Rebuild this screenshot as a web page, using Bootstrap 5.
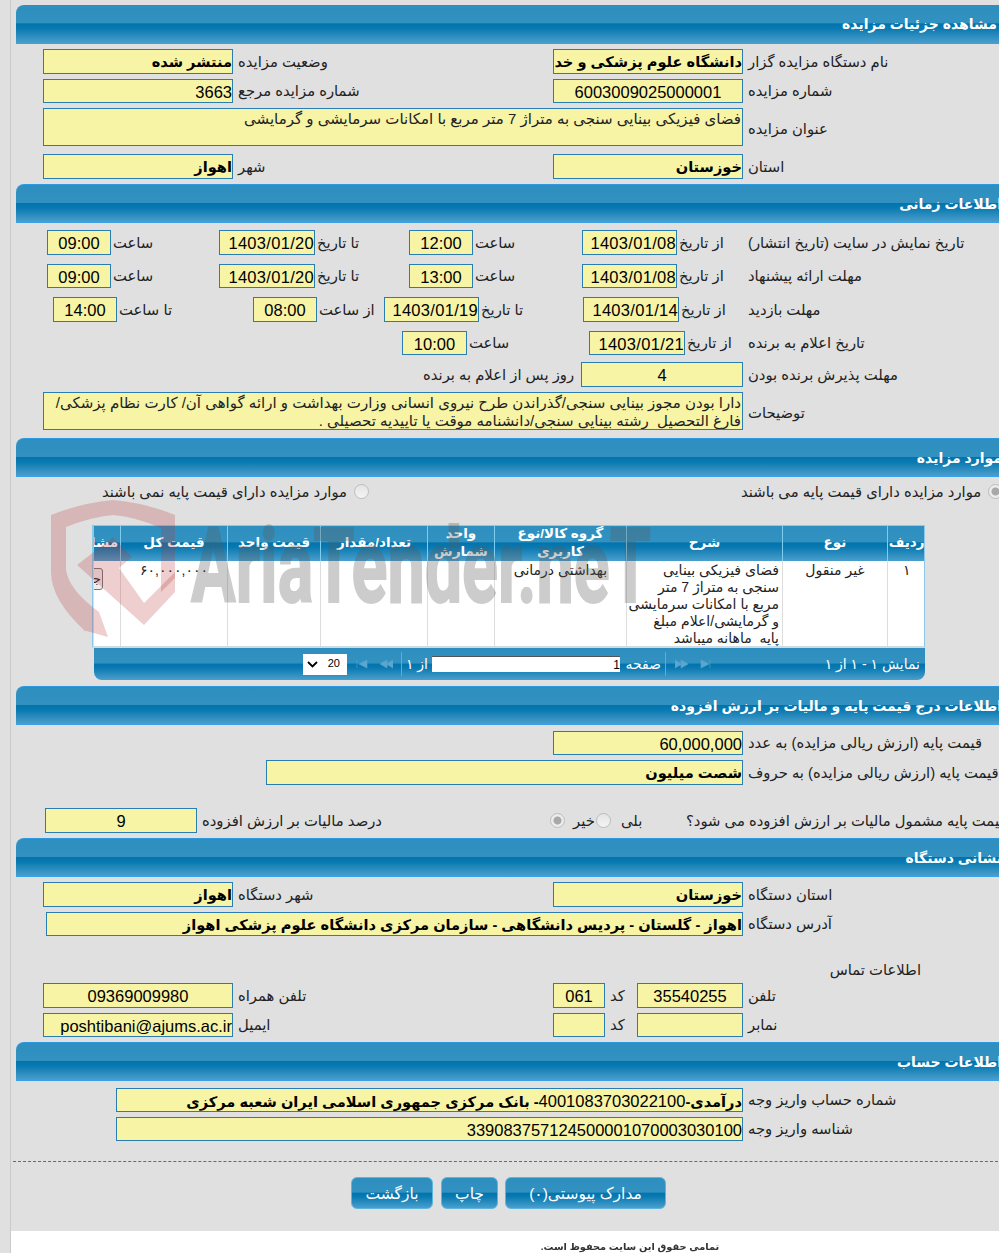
<!DOCTYPE html>
<html lang="fa">
<head>
<meta charset="utf-8">
<title>مشاهده جزئیات مزایده</title>
<link rel="stylesheet" href="https://cdn.jsdelivr.net/npm/bootstrap@5.3.0/dist/css/bootstrap.min.css">
<style>
html,body{height:1253px;overflow:hidden;background:#e0e0e0;margin:0}
body{font-family:"Liberation Sans","DejaVu Sans",sans-serif;font-size:14.8px;color:#222;line-height:1.2}
.shell{margin-left:10px;border-left:1px solid #cacaca;width:1010px;height:1253px;position:relative;overflow:hidden}
.mainarea{padding:5px 0 0 5px;height:1231px}
.hdr{height:39px;border-radius:8px 0 0 0;width:989px;direction:rtl;color:#fff;font-weight:700;font-size:14px;line-height:38px;padding-right:3px;white-space:nowrap;
 background:linear-gradient(#2d8fc0 0,#3291bf 48%,#0074ae 49%,#0a79b1 62%,#4a9fcc 100%);border-bottom:1px solid #3aa0e8}
.hdr.first{padding-right:8px}
.hdr.lined{border-top:1px solid #2f97dc}
.frow{display:grid}
.fld{background:#f7f4a6;border:1px solid #2a7db3;direction:rtl;text-align:right;white-space:nowrap;overflow:hidden;color:#000;font-size:16.5px;padding:1px 0 0 0;line-height:22px}
.fa{font-size:14.6px;font-weight:700;line-height:23px}
.dg{font-size:16.5px;font-weight:400}
.dt{letter-spacing:.3px}
.cen{text-align:center}
.area{white-space:normal;font-size:15px;line-height:18px;padding:1px 1px 0 2px;font-weight:400;color:#222}
.lbl{direction:rtl;text-align:left;white-space:nowrap;width:max-content;justify-self:start;align-self:center;padding:2px 0 0 5px;font-size:14.8px}
.lbl.near{padding-left:2px}
.lbl.tall{padding-top:6px}
.ga{padding-left:27px;grid-template-columns:190px 320px 190px 1fr}
.gw{padding-left:27px;grid-template-columns:700px 1fr}
.gt{padding-left:31px;grid-template-columns:64px 108px 96px 94px 64px 109px 95px 66px 1fr}
.gv{padding-left:37px;grid-template-columns:64px 136px 64px 67px 95px 104px 96px 64px 1fr}
.gn{padding-left:386px;grid-template-columns:65px 122px 96px 58px 1fr}
.gd{padding-left:405px;grid-template-columns:160px 162px 1fr}
.gr{padding-left:86px;grid-template-columns:252px 15px 372px 247px 15px}
.gp{padding-left:537px;grid-template-columns:190px 1fr}
.gq{padding-left:250px;grid-template-columns:477px 1fr}
.gx{padding-left:29px;grid-template-columns:152px 353px 15px 6px 25px 15px 8px 24px 38px 1fr}
.gad{padding-left:30px;grid-template-columns:697px 1fr}
.gc{padding-left:27px;grid-template-columns:190px 320px 52px 32px 106px 1fr}
.gb{padding-left:100px;grid-template-columns:627px 1fr}
.rh15{height:15px}.rh24{height:24px}.rh25{height:25px}.rh38{height:38px}
.tm5{margin-top:5px}.tm6{margin-top:6px}.tm7{margin-top:7px}.tm8{margin-top:8px}.tm9{margin-top:9px}.tm23{margin-top:23px}.tm25{margin-top:25px}.tm4{margin-top:4px}.tm28{margin-top:28px}.tm20{margin-top:20px}.tm15{margin-top:15px}
.rad{width:15px;height:15px;border-radius:50%;border:1px solid #bdbdbd;background:linear-gradient(#e4e4e4,#f4f4f4);display:block;align-self:center}
.rad.on{background:radial-gradient(circle,#a8a8a8 0 3.5px,#ececec 4.5px)}
.lab{padding:2px 2px 0 0;align-self:start}
.contact{direction:rtl;padding-right:84px;width:989px;height:18px;line-height:18px;font-size:14.8px}
.gridwrap{margin-left:76px;width:833px;overflow:hidden;border:1px solid #8cc8e8;border-bottom:2px solid #cfdbe3;height:123px}
.gridtable{table-layout:fixed;width:832px;direction:rtl;margin:-1px 0 0 0;background:#fff;border-collapse:collapse;--bs-table-bg:transparent}
.gridtable th{height:35px;padding:0 2px;text-align:center;color:#fff;font-size:13.5px;line-height:18px;font-weight:700;border:0;border-left:1px solid #7fcdee;
 background:linear-gradient(#2d8fc0 0,#3291bf 48%,#0074ae 49%,#0a79b1 62%,#4a9fcc 100%);overflow:hidden;white-space:nowrap;vertical-align:middle}
.gridtable td{height:87px;padding:1px 3px 0 3px;font-size:14px;line-height:17px;vertical-align:top;border:0;border-left:1px solid #ddd;color:#222;overflow:hidden;white-space:nowrap}
.cr{width:38px}.ct{width:105px}.cs{width:156px}.cg{width:132px}.cu{width:67px}.cq{width:107px}.cp{width:93px}.ca{width:107px}.cz{width:27px}
.tc{text-align:center}
.gridtable td.cellwrap{padding:0}
.cellbtn{display:block;width:70px;height:22px;margin:7px 17px 0 0;border:1px solid #777;border-radius:3px;background:#eee;font-size:13px;line-height:20px;color:#222;text-align:right;padding:0 1px 0 0;direction:rtl;overflow:hidden}
.pager{margin-left:78px;width:831px;height:32px;border-radius:0 0 8px 8px;color:#fff;font-size:14px;display:flex;align-items:center;direction:ltr;
 background:linear-gradient(#2d8fc0 0,#3291bf 48%,#0074ae 49%,#0a79b1 62%,#4a9fcc 100%)}
.pgsel{width:44px;height:21px;background:#fff;color:#000;margin-left:209px;display:flex;align-items:center;justify-content:space-between;padding:0 7px 0 4px;font-size:11px}
.pgico{display:block;margin-left:9px}
.pgsep{width:1px;height:24px;background:#6aa9c9;margin-left:8px}
.pgsep2{margin-left:4px}
.pgtx{direction:rtl;white-space:nowrap}
.pgof{margin-left:6px;width:24px;padding-right:4px}
.pginp{width:188px;height:16px;background:#fff;color:#000;text-align:right;font-size:12px;line-height:16px;border-top:1px solid #555}
.pgpg{margin-left:5px;width:36px}
.pgcount{margin-left:auto;margin-right:5px}
.dash{border-top:1px dashed #2a7db3;margin-left:-3px;width:1000px;height:0}
.btnrow{padding-left:335px;display:flex;height:32px}
.actbtn{height:32px;padding:1px 0 0 0;display:block;border:1px solid #5fb4dd;border-radius:6px;color:#fff;font-size:15.5px;line-height:29px;text-align:center;direction:rtl;
 background:linear-gradient(#2d8fc0 0,#3291bf 48%,#0074ae 49%,#0a79b1 62%,#4a9fcc 100%)}
.actbtn:hover{color:#fff}
.bw82{width:82px}.bw57{width:57px;margin-left:8px}.bw161{width:161px;margin-left:7px}
.foot{background:#fff;height:22px;direction:rtl;text-align:center;color:#333;font-weight:700;font-size:9.8px;padding-top:10px;width:989px}
.foot span{display:inline-block;filter:blur(.4px)}
.footin{width:600px;margin-right:70px}
.wm{position:absolute;left:0;top:0;pointer-events:none}
</style>
</head>
<body>
<div class="shell">
<div class="mainarea">
  <div class="hdr first">مشاهده جزئیات مزایده</div>
  <div class="frow ga rh25 tm5"><div class="fld fa">منتشر شده</div><div class="lbl">وضعیت مزایده</div><div class="fld fa">دانشگاه علوم پزشکی و خدمات بهداشتی درمانی اهواز</div><div class="lbl">نام دستگاه مزایده گزار</div></div>
  <div class="frow ga rh24 tm5"><div class="fld">3663</div><div class="lbl">شماره مزایده مرجع</div><div class="fld cen">6003009025000001</div><div class="lbl">شماره مزایده</div></div>
  <div class="frow gw rh38 tm5"><div class="fld area">فضای فیزیکی بینایی سنجی به متراژ 7 متر مربع با امکانات سرمایشی و گرمایشی</div><div class="lbl tall">عنوان مزایده</div></div>
  <div class="frow ga rh25 tm8"><div class="fld fa">اهواز</div><div class="lbl">شهر</div><div class="fld fa">خوزستان</div><div class="lbl">استان</div></div>

  <div class="hdr lined tm5">اطلاعات زمانی</div>
  <div class="frow gt rh25 tm7"><div class="fld cen">09:00</div><div class="lbl near">ساعت</div><div class="fld dt">1403/01/20</div><div class="lbl near">تا تاریخ</div><div class="fld cen">12:00</div><div class="lbl near">ساعت</div><div class="fld dt">1403/01/08</div><div class="lbl near">از تاریخ</div><div class="lbl">تاریخ نمایش در سایت (تاریخ انتشار)</div></div>
  <div class="frow gt rh24 tm9"><div class="fld cen">09:00</div><div class="lbl near">ساعت</div><div class="fld dt">1403/01/20</div><div class="lbl near">تا تاریخ</div><div class="fld cen">13:00</div><div class="lbl near">ساعت</div><div class="fld dt">1403/01/08</div><div class="lbl near">از تاریخ</div><div class="lbl">مهلت ارائه پیشنهاد</div></div>
  <div class="frow gv rh25 tm9"><div class="fld cen">14:00</div><div class="lbl near">تا ساعت</div><div class="fld cen">08:00</div><div class="lbl near">از ساعت</div><div class="fld dt">1403/01/19</div><div class="lbl near">تا تاریخ</div><div class="fld dt">1403/01/14</div><div class="lbl near">از تاریخ</div><div class="lbl">مهلت بازدید</div></div>
  <div class="frow gn rh24 tm9"><div class="fld cen">10:00</div><div class="lbl near">ساعت</div><div class="fld dt">1403/01/21</div><div class="lbl near">از تاریخ</div><div class="lbl">تاریخ اعلام به برنده</div></div>
  <div class="frow gd rh25 tm7"><div class="lbl near">روز پس از اعلام به برنده</div><div class="fld cen">4</div><div class="lbl">مهلت پذیرش برنده بودن</div></div>
  <div class="frow gw rh38 tm5"><div class="fld area">دارا بودن مجوز بینایی سنجی/گذراندن طرح نیروی انسانی وزارت بهداشت و ارائه گواهی آن/ کارت نظام پزشکی/<br>فارغ التحصیل&nbsp; رشته بینایی سنجی/دانشنامه موقت یا تاییدیه تحصیلی .</div><div class="lbl tall">توضیحات</div></div>

  <div class="hdr lined tm8">موارد مزایده</div>
  <div class="frow gr rh15 tm5"><div class="lbl lab">موارد مزایده دارای قیمت پایه نمی باشند</div><span class="rad"></span><span></span><div class="lbl lab">موارد مزایده دارای قیمت پایه می باشند</div><span class="rad on"></span></div>

  <div class="gridwrap tm28">
    <table class="table gridtable">
      <colgroup><col class="cr"><col class="ct"><col class="cs"><col class="cg"><col class="cu"><col class="cq"><col class="cp"><col class="ca"><col class="cz"></colgroup>
      <thead><tr><th>ردیف</th><th>نوع</th><th>شرح</th><th>گروه کالا/نوع<br>کاربری</th><th>واحد<br>شمارش</th><th>تعداد/مقدار</th><th>قیمت واحد</th><th>قیمت کل</th><th>مشاهده</th></tr></thead>
      <tbody><tr><td class="tc">۱</td><td class="tc">غیر منقول</td><td>فضای فیزیکی بینایی<br>سنجی به متراژ 7 متر<br>مربع با امکانات سرمایشی<br>و گرمایشی/اعلام مبلغ<br>پایه&nbsp; ماهانه میباشد</td><td class="tc">بهداشتی درمانی</td><td></td><td></td><td></td><td class="tc">۶۰,۰۰۰,۰۰۰</td><td class="cellwrap"><span class="cellbtn">جزئیات</span></td></tr></tbody>
    </table>
  </div>
  <div class="pager">
    <div class="pgsel"><svg width="11" height="7" viewBox="0 0 11 7"><path d="M1 1l4.500 4.500L10 1" fill="none" stroke="#000" stroke-width="1.800"/></svg><span>20</span></div>
    <svg class="pgico" width="37" height="10" viewBox="0 0 37 10"><path d="M1 1v8M11 1v8L3 5zM31 1v8l-7-4zM37 1v8l-7-4z" fill="#5aa6cf" stroke="#5aa6cf" stroke-width=".6"/></svg>
    <span class="pgsep"></span>
    <span class="pgtx pgof">از ۱</span>
    <div class="pginp">1</div>
    <span class="pgtx pgpg">صفحه</span>
    <span class="pgsep pgsep2"></span>
    <svg class="pgico" width="36" height="10" viewBox="0 0 36 10"><path d="M0 1v8l7-4zM6 1v8l7-4zM26 1v8l8-4zM35 1v8" fill="#5aa6cf" stroke="#5aa6cf" stroke-width=".6"/></svg>
    <span class="pgtx pgcount">نمایش ۱ - ۱ از ۱</span>
  </div>

  <div class="hdr lined tm6">اطلاعات درج قیمت پایه و مالیات بر ارزش افزوده</div>
  <div class="frow gp rh24 tm6"><div class="fld">60,000,000</div><div class="lbl">قیمت پایه (ارزش ریالی مزایده) به عدد</div></div>
  <div class="frow gq rh25 tm5"><div class="fld fa">شصت میلیون</div><div class="lbl">قیمت پایه (ارزش ریالی مزایده) به حروف</div></div>
  <div class="frow gx rh25 tm23"><div class="fld cen">9</div><div class="lbl">درصد مالیات بر ارزش افزوده</div><span class="rad on"></span><span></span><div class="lbl near">خیر</div><span class="rad"></span><span></span><div class="lbl near">بلی</div><span></span><div class="lbl">قیمت پایه مشمول مالیات بر ارزش افزوده می شود؟</div></div>

  <div class="hdr lined tm5">نشانی دستگاه</div>
  <div class="frow ga rh25 tm5"><div class="fld fa">اهواز</div><div class="lbl">شهر دستگاه</div><div class="fld fa">خوزستان</div><div class="lbl">استان دستگاه</div></div>
  <div class="frow gad rh24 tm5"><div class="fld fa">اهواز - گلستان - پردیس دانشگاهی - سازمان مرکزی دانشگاه علوم پزشکی اهواز</div><div class="lbl">آدرس دستگاه</div></div>
  <div class="contact tm25">اطلاعات تماس</div>
  <div class="frow gc rh25 tm4"><div class="fld cen">09369009980</div><div class="lbl">تلفن همراه</div><div class="fld cen">061</div><div class="lbl">کد</div><div class="fld cen">35540255</div><div class="lbl">تلفن</div></div>
  <div class="frow gc rh24 tm5"><div class="fld">poshtibani@ajums.ac.ir</div><div class="lbl">ایمیل</div><div class="fld"></div><div class="lbl">کد</div><div class="fld"></div><div class="lbl">نمابر</div></div>

  <div class="hdr lined tm5">اطلاعات حساب</div>
  <div class="frow gb rh24 tm7"><div class="fld fa">درآمدی-<span class="dg">4001083703022100</span>- بانک مرکزی جمهوری اسلامی ایران شعبه مرکزی</div><div class="lbl">شماره حساب واریز وجه</div></div>
  <div class="frow gb rh24 tm5"><div class="fld">339083757124500001070003030100</div><div class="lbl">شناسه واریز وجه</div></div>
  <div class="dash tm20"></div>
  <div class="btnrow tm15"><a class="btn actbtn bw82" href="#">بازگشت</a><a class="btn actbtn bw57" href="#">چاپ</a><a class="btn actbtn bw161" href="#">مدارک پیوستی(۰)</a></div>
</div>
<div class="foot"><div class="footin"><span>تمامی حقوق این سایت محفوظ است.</span></div></div>
<svg class="wm" width="999" height="1253" viewBox="10 0 999 1253">
  <g fill="rgba(185,50,50,.24)">
    <path d="M50 515Q80 503 112 500Q145 503 174 515V578L160 592V528Q135 517 112 515Q90 517 65 527V570Q68 590 98 612L107 637L82 630L85 632Q50 600 50 572Z"/>
    <path d="M76 565L112 537L131 557L118 568L143 603L174 572V592L143 625Z"/>
  </g>
  <text x="190" y="602" textLength="460" lengthAdjust="spacingAndGlyphs" font-family="Roboto" font-weight="700" font-size="104" fill="#5a5a5a" stroke="#5a5a5a" stroke-width="2" opacity=".3">AriaTender.neT</text>
</svg>
</div>
<script src="https://cdn.jsdelivr.net/npm/bootstrap@5.3.0/dist/js/bootstrap.bundle.min.js"></script>
</body>
</html>
